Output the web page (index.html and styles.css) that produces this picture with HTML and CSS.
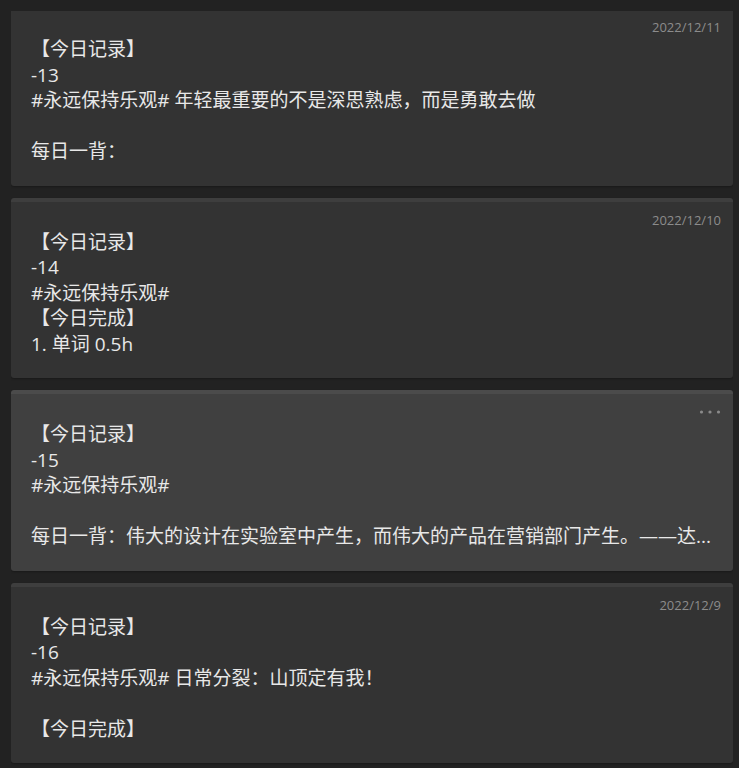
FILE: index.html
```html
<!DOCTYPE html>
<html lang="zh-CN">
<head>
<meta charset="utf-8">
<title>Notes</title>
<link rel="stylesheet" href="styles.css">
</head>
<body>
<div class="viewport">
  <div class="list">
    <div class="card">
      <div class="meta"><span class="date">2022/12/11</span></div>
      <div class="body">
        <div class="line">【今日记录】</div>
        <div class="line">-13</div>
        <div class="line">#永远保持乐观# 年轻最重要的不是深思熟虑，而是勇敢去做</div>
        <div class="line">&nbsp;</div>
        <div class="line">每日一背：</div>
      </div>
    </div>
    <div class="card">
      <div class="meta"><span class="date">2022/12/10</span></div>
      <div class="body">
        <div class="line">【今日记录】</div>
        <div class="line">-14</div>
        <div class="line">#永远保持乐观#</div>
        <div class="line">【今日完成】</div>
        <div class="line">1. 单词 0.5h</div>
      </div>
    </div>
    <div class="card card-active">
      <div class="meta">
        <svg class="more" width="22" height="6" viewBox="0 0 22 6">
          <circle cx="2.5" cy="3" r="1.6"/>
          <circle cx="11" cy="3" r="1.6"/>
          <circle cx="19.5" cy="3" r="1.6"/>
        </svg>
      </div>
      <div class="body">
        <div class="line">【今日记录】</div>
        <div class="line">-15</div>
        <div class="line">#永远保持乐观#</div>
        <div class="line">&nbsp;</div>
        <div class="line">每日一背：伟大的设计在实验室中产生，而伟大的产品在营销部门产生。——达...</div>
      </div>
    </div>
    <div class="card">
      <div class="meta"><span class="date">2022/12/9</span></div>
      <div class="body">
        <div class="line">【今日记录】</div>
        <div class="line">-16</div>
        <div class="line">#永远保持乐观# 日常分裂：山顶定有我！</div>
        <div class="line">&nbsp;</div>
        <div class="line">【今日完成】</div>
      </div>
    </div>
  </div>
</div>
</body>
</html>
```

FILE: styles.css
```css
html, body {
  margin: 0;
  padding: 0;
  background: #222222;
  height: 100%;
  overflow: hidden;
}

.viewport {
  margin: 11px 6px 0 11px;
  height: 757px;
  overflow: hidden;
}

.list {
  margin-top: -6px;
  display: flex;
  flex-direction: column;
  gap: 12px;
}

.card {
  background: #333333;
  border-top: 4px solid #3e3e3e;
  border-radius: 3px;
  padding: 8px 12px 21px 20px;
  box-shadow: 0 1px 2px rgba(0, 0, 0, 0.25);
  color: #e8e8e8;
}

.card-active {
  background: #404040;
  border-top-color: #4b4b4b;
}

.meta {
  height: 20px;
  display: flex;
  justify-content: flex-end;
  align-items: center;
}

.date {
  font-family: "Open Sans", "Noto Sans", sans-serif;
  font-size: 13px;
  color: #8c8c8c;
  line-height: 20px;
}

.more {
  fill: #8a8a8a;
}

.body {
  font-family: "Open Sans", "Noto Sans CJK SC", sans-serif;
  font-size: 19px;
  line-height: 25.5px;
}

.line {
  white-space: nowrap;
}
```
